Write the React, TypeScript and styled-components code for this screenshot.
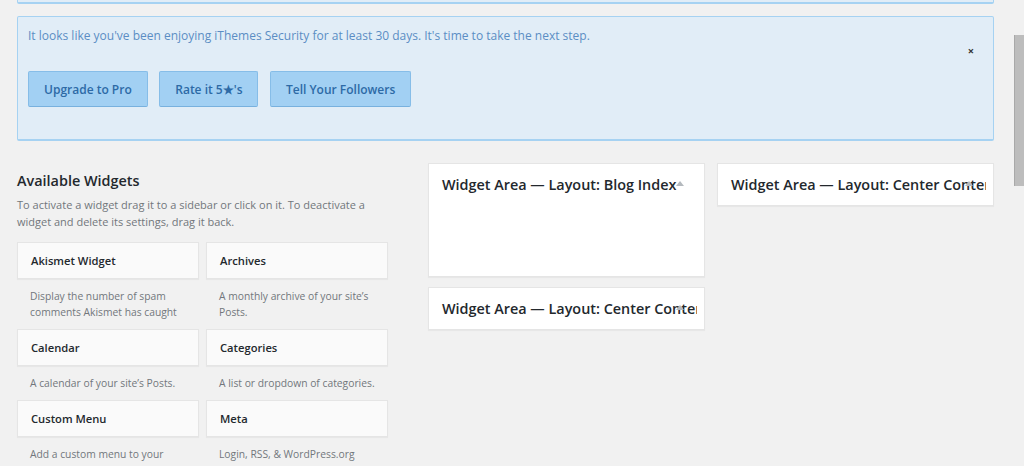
import styled, { createGlobalStyle } from "styled-components";

const GlobalStyle = createGlobalStyle`
  html, body {
    margin: 0;
    padding: 0;
    background: #f1f1f1;
    overflow: hidden;
  }
  body {
    font-family: "Open Sans", "Liberation Sans", sans-serif;
    font-size: 12px;
    color: #444;
  }
`;

type Widget = { title: string; desc: string };

const widgets: Widget[] = [
  { title: "Akismet Widget", desc: "Display the number of spam comments Akismet has caught" },
  { title: "Archives", desc: "A monthly archive of your site\u2019s Posts." },
  { title: "Calendar", desc: "A calendar of your site\u2019s Posts." },
  { title: "Categories", desc: "A list or dropdown of categories." },
  { title: "Custom Menu", desc: "Add a custom menu to your sidebar." },
  { title: "Meta", desc: "Login, RSS, & WordPress.org links." },
];

const Page = styled.div`
  padding: 0 30px 0 17px;
`;

const PrevNotice = styled.div`
  height: 2px;
  background: #e1edf7;
  border: 1px solid #a6d2f2;
  border-top: none;
  border-bottom-width: 2px;
  border-radius: 0 0 2px 2px;
`;

const Notice = styled.div`
  position: relative;
  margin-top: 12px;
  background: #e1edf7;
  border: 1px solid #a6d2f2;
  border-bottom-width: 2px;
  border-radius: 2px;
  padding: 9px 11px 32px 10px;
`;

const NoticeText = styled.p`
  margin: 0;
  line-height: 20px;
  font-size: 12px;
  color: #5b8dc4;
`;

const Dismiss = styled.span`
  position: absolute;
  top: 28px;
  right: 19px;
  font-size: 11px;
  font-weight: 700;
  color: #333;
  line-height: 1;
`;

const ButtonRow = styled.div`
  display: flex;
  gap: 11.5px;
  margin-top: 25px;
`;

const NoticeButton = styled.button`
  height: 36px;
  padding: 0 15px;
  background: #a2d0f3;
  border: 1px solid #86bde8;
  border-bottom-color: #78b1de;
  border-radius: 2px;
  font-family: inherit;
  font-size: 12px;
  font-weight: 600;
  color: #2d6aa6;
  cursor: pointer;
`;

const Columns = styled.div`
  display: flex;
  align-items: flex-start;
  margin-top: 22px;
`;

const Available = styled.div`
  width: 371px;
  margin-right: 40px;
  flex-shrink: 0;
`;

const Heading = styled.h2`
  margin: 8px 0 0;
  font-size: 14.4px;
  line-height: 20px;
  font-weight: 600;
  color: #23282d;
`;

const Intro = styled.p`
  margin: 5px 0 0;
  font-size: 11px;
  line-height: 17px;
  color: #72777c;
`;

const WidgetGrid = styled.div`
  display: grid;
  grid-template-columns: 182px 182px;
  column-gap: 7px;
  margin-top: 12px;
`;

const WidgetItem = styled.div`
  display: flex;
  flex-direction: column;
`;

const WidgetCard = styled.div`
  box-sizing: border-box;
  height: 37px;
  padding: 0 13px;
  display: flex;
  align-items: center;
  background: #fafafa;
  border: 1px solid #e5e5e5;
  box-shadow: 0 1px 1px rgba(0, 0, 0, 0.04);
  font-size: 11.2px;
  font-weight: 600;
  color: #23282d;
`;

const WidgetDesc = styled.div`
  padding: 9px 10px 9px 13px;
  line-height: 16px;
  font-size: 10.3px;
  color: #72777c;
`;

const AreaColumn = styled.div`
  width: 277px;
  display: flex;
  flex-direction: column;
  gap: 10px;
  margin-right: 12px;
  &:last-child {
    margin-right: 0;
  }
`;

const AreaBox = styled.div<{ $open?: boolean }>`
  box-sizing: border-box;
  background: #fff;
  border: 1px solid #e5e5e5;
  box-shadow: 0 1px 1px rgba(0, 0, 0, 0.04);
  min-height: ${(p) => (p.$open ? "114px" : "0")};
`;

const AreaHeader = styled.div`
  position: relative;
`;

const Arrow = styled.span`
  position: absolute;
  right: 20px;
  top: 17px;
  width: 0;
  height: 0;
  border-left: 4px solid transparent;
  border-right: 4px solid transparent;
  border-bottom: 5px solid #b4b9be;
`;

const AreaTitle = styled.h2`
  margin: 0 7px 0 0;
  padding: 11px 0 11px 13px;
  font-size: 14.4px;
  line-height: 19px;
  font-weight: 600;
  color: #23282d;
  white-space: nowrap;
  overflow: hidden;
`;

const ScrollTrack = styled.div`
  position: fixed;
  top: 0;
  right: 0;
  width: 12px;
  height: 100%;
  background: #f1f1f1;
`;

const ScrollThumb = styled.div`
  margin: 35px 0 0 2px;
  height: 151px;
  background: #bdbdbd;
  border-left: 1px solid #a9a9a9;
`;

const Area = ({ title, open }: { title: string; open?: boolean }) => (
  <AreaBox $open={open}>
    <AreaHeader>
      <AreaTitle>{title}</AreaTitle>
      <Arrow />
    </AreaHeader>
  </AreaBox>
);

export default function App() {
  return (
    <>
      <GlobalStyle />
      <Page>
        <PrevNotice />
        <Notice>
          <NoticeText>
            It looks like you've been enjoying iThemes Security for at least 30 days. It's time to take the next step.
          </NoticeText>
          <Dismiss>×</Dismiss>
          <ButtonRow>
            <NoticeButton>Upgrade to Pro</NoticeButton>
            <NoticeButton>Rate it 5★'s</NoticeButton>
            <NoticeButton>Tell Your Followers</NoticeButton>
          </ButtonRow>
        </Notice>
        <Columns>
          <Available>
            <Heading>Available Widgets</Heading>
            <Intro>
              To activate a widget drag it to a sidebar or click on it. To deactivate a widget and delete its settings, drag it back.
            </Intro>
            <WidgetGrid>
              {widgets.map((w) => (
                <WidgetItem key={w.title}>
                  <WidgetCard>{w.title}</WidgetCard>
                  <WidgetDesc>{w.desc}</WidgetDesc>
                </WidgetItem>
              ))}
            </WidgetGrid>
          </Available>
          <AreaColumn>
            <Area title="Widget Area — Layout: Blog Index" open />
            <Area title="Widget Area — Layout: Center Content" />
          </AreaColumn>
          <AreaColumn>
            <Area title="Widget Area — Layout: Center Content" />
          </AreaColumn>
        </Columns>
      </Page>
      <ScrollTrack>
        <ScrollThumb />
      </ScrollTrack>
    </>
  );
}
